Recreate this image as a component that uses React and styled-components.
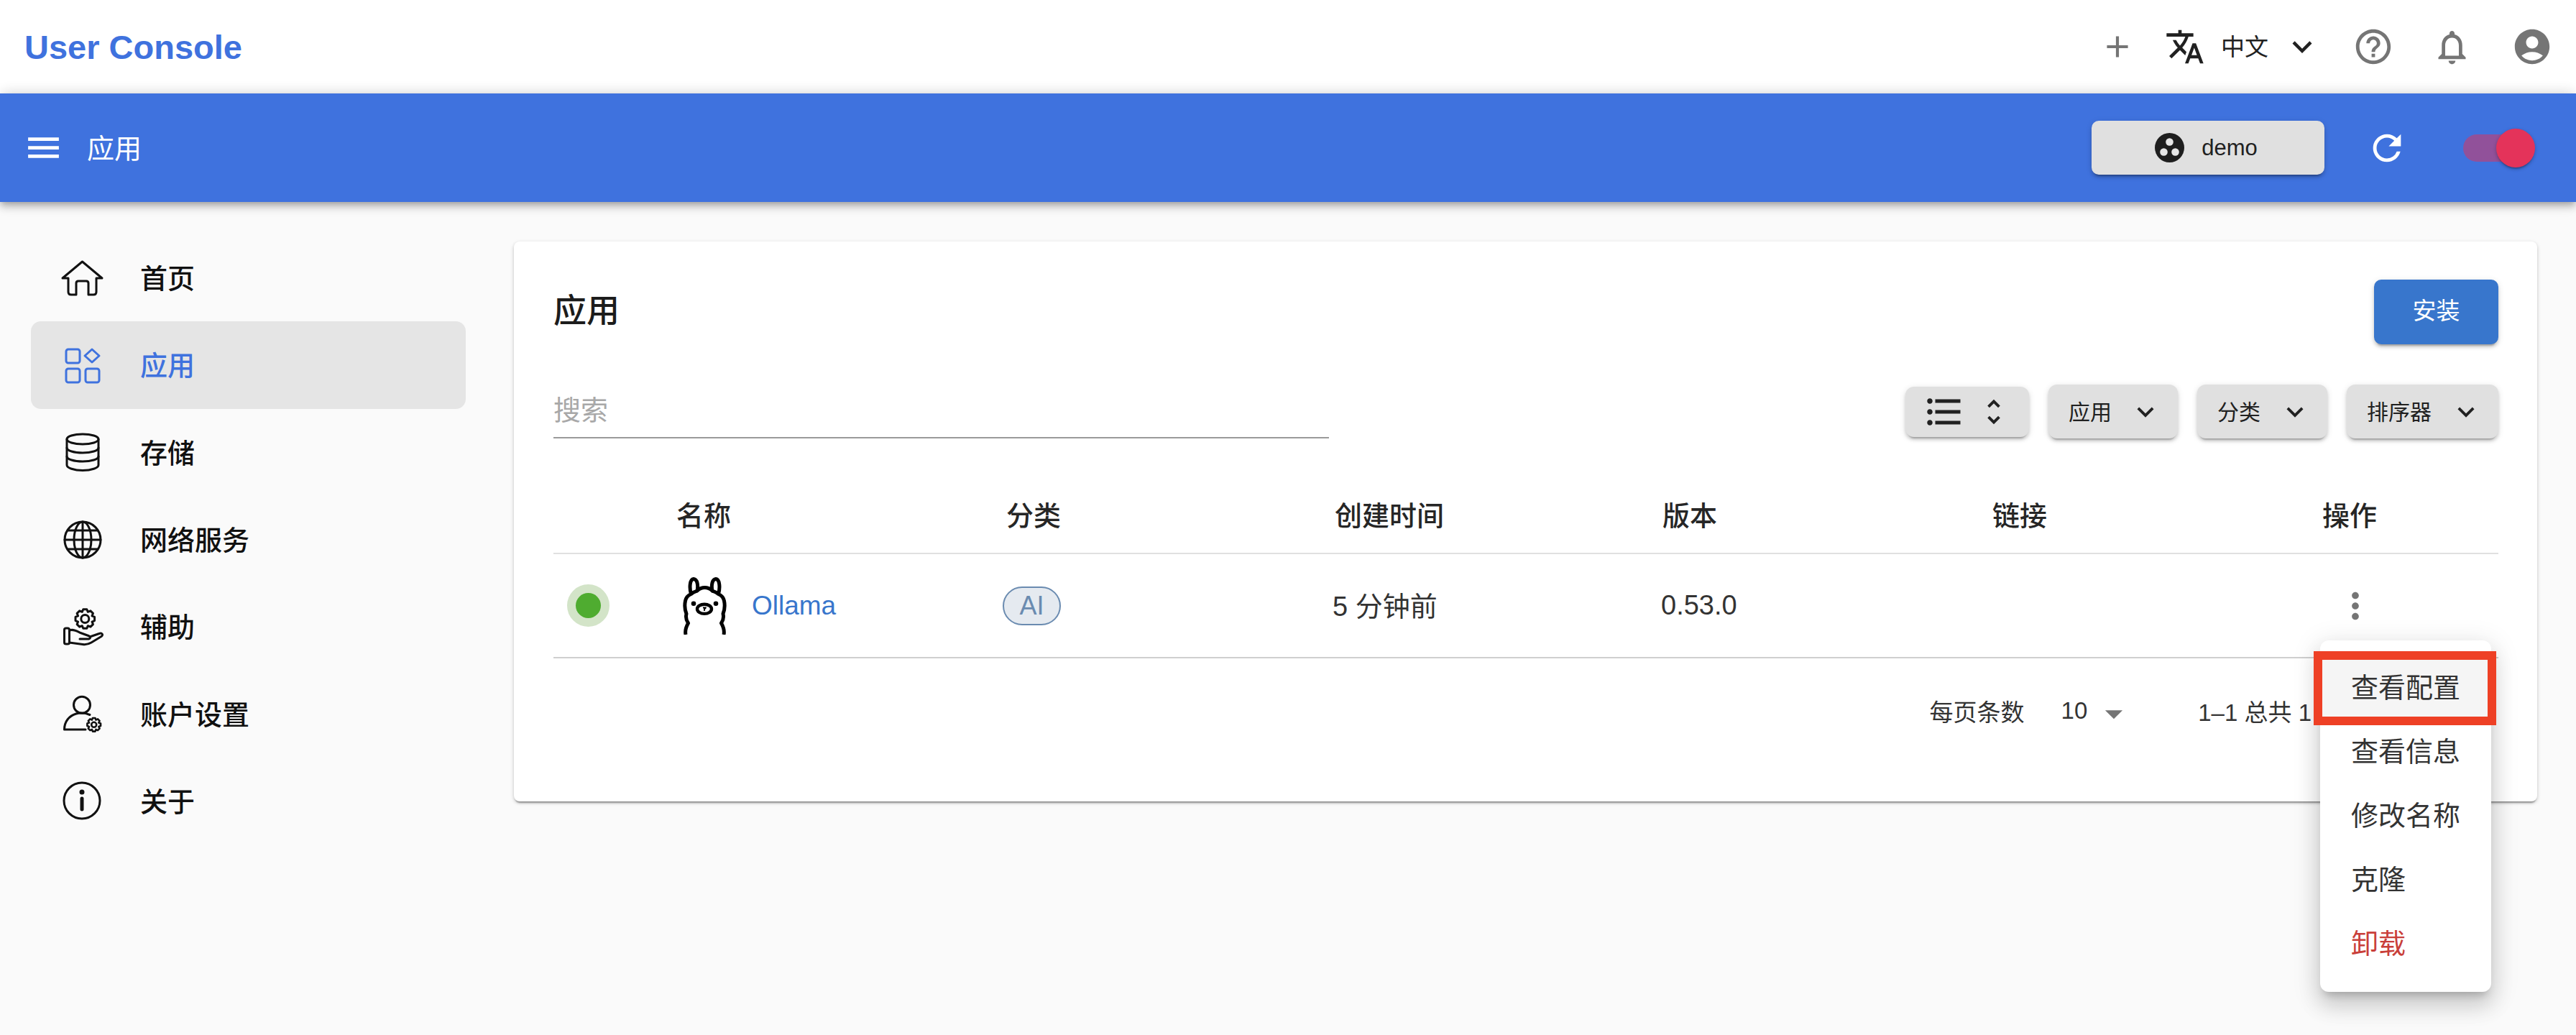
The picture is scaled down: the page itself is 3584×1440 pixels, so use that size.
import React from 'react';
import styled, { createGlobalStyle } from 'styled-components';
import {
  MdMenu, MdAdd, MdTranslate, MdKeyboardArrowDown, MdHelpOutline, MdNotificationsNone,
  MdAccountCircle, MdRefresh, MdFormatListBulleted, MdUnfoldMore, MdMoreVert, MdArrowDropDown,
} from 'react-icons/md';

const FONT = '"Liberation Sans", "Noto Sans CJK SC", sans-serif';

const Global = createGlobalStyle`
  html, body { margin: 0; padding: 0; background: #fafafa; }
  body { font-family: ${FONT}; }
  * { box-sizing: border-box; }
`;

const Page = styled.div`
  width: 3584px;
  height: 1440px;
  overflow: hidden;
  background: #fafafa;
  display: flex;
  flex-direction: column;
`;

const TopBar = styled.header`
  height: 130px;
  flex: none;
  background: #fff;
  display: flex;
  align-items: center;
  justify-content: space-between;
  padding: 0 32px 0 34px;
`;

const Brand = styled.div`
  font-size: 47px;
  font-weight: 700;
  color: #3f72de;
`;

const TopActions = styled.div`
  display: flex;
  align-items: center;
`;

const IconSlot = styled.span`
  display: inline-flex;
  margin-left: ${(p) => p.$gap || 0}px;
  color: ${(p) => p.$color || '#757575'};
`;

const LangLabel = styled.span`
  font-size: 33px;
  color: #212121;
  margin: 0 0 4px 22px;
`;

const AppBar = styled.div`
  position: relative;
  z-index: 2;
  height: 151px;
  flex: none;
  background: #3f72de;
  display: flex;
  align-items: center;
  padding: 0 57px 0 39px;
  box-shadow: 0 4px 8px -2px rgba(0, 0, 0, 0.2), 0 8px 10px rgba(0, 0, 0, 0.14), 0 2px 20px rgba(0, 0, 0, 0.12),
    0 -6px 16px -4px rgba(0, 0, 0, 0.07);
  color: #fff;
`;

const MenuGlyph = styled.span`
  display: inline-flex;
  margin-left: -7px;
`;

const BarTitle = styled.div`
  font-size: 38px;
  margin: 0 0 5px 32px;
  flex: 1;
`;

const WorkspaceButton = styled.button`
  width: 324px;
  height: 75px;
  border: 0;
  border-radius: 10px;
  padding: 0 5px 0 0;
  background: #e0e0e0;
  color: #212121;
  font-family: ${FONT};
  font-size: 31px;
  display: flex;
  align-items: center;
  justify-content: center;
  gap: 24px;
  box-shadow: 0 6px 2px -4px rgba(0, 0, 0, 0.2), 0 4px 4px rgba(0, 0, 0, 0.14), 0 2px 10px rgba(0, 0, 0, 0.12);
`;

const Toggle = styled.div`
  position: relative;
  width: 100px;
  height: 38px;
  margin-left: 77px;
  border-radius: 19px 0 0 19px;
  background: linear-gradient(90deg, #91519a 0 93px, transparent 93px);
`;

const ToggleThumb = styled.span`
  position: absolute;
  right: 0;
  top: -8px;
  width: 54px;
  height: 54px;
  border-radius: 50%;
  background: #e4335a;
  box-shadow: 0 4px 2px -2px rgba(0, 0, 0, 0.2), 0 2px 4px rgba(0, 0, 0, 0.14), 0 2px 6px rgba(0, 0, 0, 0.12);
`;

const Body = styled.div`
  flex: 1;
  display: flex;
  min-height: 0;
`;

const Sidebar = styled.nav`
  width: 715px;
  flex: none;
  padding: 45px 67px 0 43px;
  display: flex;
  flex-direction: column;
`;

const NavItem = styled.div`
  height: 121.3px;
  flex: none;
  display: flex;
  align-items: center;
  padding-left: 42px;
  gap: 50px;
  border-radius: 14px;
  font-size: 38px;
  font-weight: 500;
  color: ${(p) => (p.$active ? '#3f72de' : '#111')};
  background: ${(p) => (p.$active ? '#e5e5e5' : 'transparent')};
`;

const NavLabel = styled.span`
  margin-bottom: 4px;
`;

const NavIcon = styled.svg`
  width: 60px;
  height: 60px;
  flex: none;
  fill: none;
  stroke: currentColor;
  stroke-width: 3;
  stroke-linejoin: round;
  stroke-linecap: round;
`;

const Main = styled.main`
  flex: 1;
  padding: 55px 54px 0 0;
`;

const Card = styled.section`
  position: relative;
  background: #fff;
  border-radius: 8px;
  padding: 53px 54px 49px 55px;
  box-shadow: 0 4px 2px -2px rgba(0, 0, 0, 0.3), 0 2px 4px rgba(0, 0, 0, 0.14), 0 2px 6px rgba(0, 0, 0, 0.1);
`;

const CardHead = styled.div`
  height: 90px;
  display: flex;
  align-items: center;
  justify-content: space-between;
`;

const CardTitle = styled.h1`
  margin: 0 0 13px;
  font-size: 46px;
  font-weight: 500;
  color: #1c1c1c;
`;

const PrimaryButton = styled.button`
  width: 173px;
  height: 90px;
  border: 0;
  border-radius: 10px;
  padding: 0 0 8px;
  background: #3876cc;
  color: #fff;
  font-family: ${FONT};
  font-size: 33px;
  box-shadow: 0 6px 2px -4px rgba(0, 0, 0, 0.2), 0 4px 4px rgba(0, 0, 0, 0.14), 0 2px 10px rgba(0, 0, 0, 0.12);
`;

const Toolbar = styled.div`
  margin-top: 56px;
  height: 75px;
  display: flex;
  align-items: center;
  justify-content: space-between;
`;

const SearchInput = styled.input`
  width: 1079px;
  height: 75px;
  border: 0;
  border-bottom: 2px solid #9a9a9a;
  outline: 0;
  padding: 0;
  background: transparent;
  font-family: ${FONT};
  font-size: 38px;
  &::placeholder { color: #a8a8a8; opacity: 1; }
`;

const ToolGroup = styled.div`
  display: flex;
  align-items: center;
  gap: 27px;
`;

const ToolButton = styled.button`
  width: ${(p) => p.$w}px;
  height: ${(p) => p.$h || 75}px;
  border: 0;
  padding: 0 22px 0 28px;
  border-radius: 12px;
  background: #e0e0e0;
  color: #212121;
  font-family: ${FONT};
  font-size: 30px;
  display: flex;
  align-items: center;
  justify-content: space-between;
  box-shadow: 0 6px 2px -4px rgba(0, 0, 0, 0.2), 0 4px 4px rgba(0, 0, 0, 0.14), 0 2px 10px rgba(0, 0, 0, 0.12);
`;

const ToolLabel = styled.span`
  margin-bottom: 4px;
`;

const ViewButton = styled(ToolButton)`
  padding: 0 26px 0 24px;
`;

const Columns = styled.div`
  display: grid;
  grid-template-columns: 171px 459px 457px 456px 459px 459px 245px;
  align-items: center;
`;

const HeaderRow = styled(Columns)`
  margin-top: 54px;
  height: 107px;
  padding-bottom: 4px;
  border-bottom: 2px solid #e0e0e0;
  font-size: 38px;
  font-weight: 500;
  color: #262626;
`;

const DataRow = styled(Columns)`
  height: 145px;
  border-bottom: 2px solid #cfcfcf;
  font-size: 38px;
  color: #333;
`;

const TimeCell = styled.div`
  margin: 0 0 4px -3px;
`;

const VersionCell = styled.div`
  margin-left: -2px;
`;

const StatusDot = styled.span`
  display: block;
  width: 59px;
  height: 59px;
  margin-left: 19px;
  border-radius: 50%;
  background: #d3e4c8;
  border: 12.5px solid #d3e4c8;

  &::after {
    content: '';
    display: block;
    width: 100%;
    height: 100%;
    border-radius: 50%;
    background: #4fac30;
  }
`;

const NameCell = styled.div`
  display: flex;
  align-items: center;
  gap: 35px;
  padding-left: 9px;
`;

const AppLink = styled.a`
  color: #3876cc;
  font-size: 37px;
`;

const Chip = styled.span`
  display: inline-flex;
  align-items: center;
  justify-content: center;
  width: 81px;
  height: 54px;
  margin-left: -5px;
  border-radius: 27px;
  background: #e5eaf0;
  border: 2px solid #6a8bb0;
  color: #6a8bb0;
  font-size: 36px;
`;

const KebabCell = styled.div`
  display: flex;
  color: #757575;
  margin-left: 17px;
`;

const Pagination = styled.div`
  height: 150px;
  display: flex;
  align-items: center;
  justify-content: flex-end;
  padding: 0 260px 4px 0;
  font-size: 33px;
  color: #333;
`;

const PageSize = styled.span`
  margin-left: 51px;
`;

const PageCaret = styled.span`
  display: inline-flex;
  color: #757575;
  margin: 8px 88px 0 8px;
`;

const Popover = styled.div`
  position: absolute;
  z-index: 3;
  top: 555px;
  right: 64px;
  width: 238px;
  height: 489px;
  padding: 22px 0;
  background: #fff;
  border-radius: 12px;
  box-shadow: 0 10px 12px -6px rgba(0, 0, 0, 0.2), 0 20px 30px 2px rgba(0, 0, 0, 0.12), 0 8px 36px 6px rgba(0, 0, 0, 0.1);
`;

const PopItem = styled.div`
  position: relative;
  height: 89px;
  display: flex;
  align-items: center;
  padding: 0 0 9px 43px;
  font-size: 38px;
  color: ${(p) => (p.$danger ? '#c93f3a' : '#333')};
  background: ${(p) => (p.$active ? '#f5f5f5' : 'transparent')};
`;

const Callout = styled.span`
  position: absolute;
  top: -7px;
  bottom: -7px;
  left: -9px;
  right: -7px;
  border: 12px solid #ee4025;
`;

const gearPath = (cx, cy, outer, inner, teeth) => {
  const pts = [];
  const step = (Math.PI * 2) / teeth;
  for (let i = 0; i < teeth; i += 1) {
    const a = i * step - Math.PI / 2;
    [[-0.5, inner], [-0.24, outer], [0.24, outer], [0.5, inner]].forEach(([o, r]) => {
      const t = a + o * step;
      pts.push(`${(cx + r * Math.cos(t)).toFixed(2)} ${(cy + r * Math.sin(t)).toFixed(2)}`);
    });
  }
  return `M${pts.join(' L')} Z`;
};

const Home = () => (
  <NavIcon viewBox="0 0 60 60">
    <path d="M2 30 L29.5 7 L57 30 H49 V49 Q49 53 45 53 H38 V37 Q38 34 35 34 H24 Q21 34 21 37 V53 H14 Q10 53 10 49 V30 Z" />
  </NavIcon>
);

const Apps = () => (
  <NavIcon viewBox="0 0 60 60">
    <rect x="7" y="8" width="19" height="19" rx="3" />
    <rect x="7" y="35" width="19" height="19" rx="3" />
    <rect x="34" y="35" width="19" height="19" rx="3" />
    <path d="M43 8 L53 17 L43 26 L33 17 Z" />
  </NavIcon>
);

const Storage = () => (
  <NavIcon viewBox="0 0 60 60">
    <ellipse cx="30" cy="12" rx="22" ry="7" />
    <path d="M8 12 V48 C8 52 18 55.5 30 55.5 C42 55.5 52 52 52 48 V12" />
    <path d="M8 24 C8 28 18 31 30 31 C42 31 52 28 52 24" />
    <path d="M8 36 C8 40 18 43 30 43 C42 43 52 40 52 36" />
  </NavIcon>
);

const Globe = () => (
  <NavIcon viewBox="0 0 60 60">
    <circle cx="30" cy="30" r="25" />
    <ellipse cx="30" cy="30" rx="12" ry="25" />
    <path d="M30 5 V55 M5 30 H55 M9 17 H51 M9 43 H51" />
  </NavIcon>
);

const HandGear = () => (
  <NavIcon viewBox="0 0 60 60">
    <path d={gearPath(33.3, 19, 13.5, 10.5, 8)} />
    <circle cx="33.3" cy="19" r="5.5" />
    <path d="M4.5 34 Q4.5 32 7 32 H9 Q11.5 32 11.5 34 V52 Q11.5 54 9 54 H7 Q4.5 54 4.5 52 Z" />
    <path d="M11.5 35 C17 33 22 36 27 38.5 L38 42.5 C42 44 41 47 37 47 H26" />
    <path d="M40 44 L53 39.5 C57 38 59 41 56 43.5 L42 52 C38 54.5 34 55 30 54.5 L11.5 52" />
  </NavIcon>
);

const UserGear = () => (
  <NavIcon viewBox="0 0 60 60">
    <circle cx="29" cy="17.7" r="11.5" />
    <path d="M40 31.5 C34 29 27 28.5 21 30 C11 33 4.5 41 4.5 52 H34" />
    <path d={gearPath(45.7, 45.3, 9.5, 7.2, 8)} strokeWidth="2.6" />
    <circle cx="45.7" cy="45.3" r="3.5" strokeWidth="2.6" />
  </NavIcon>
);

const Info = () => (
  <NavIcon viewBox="0 0 60 60">
    <circle cx="29" cy="30" r="25" />
    <path d="M29 27 V42" strokeWidth="5" />
    <circle cx="29" cy="18" r="2" strokeWidth="3" fill="currentColor" />
  </NavIcon>
);

const WorkspaceIcon = () => (
  <svg width="41" height="41" viewBox="0 0 41 41">
    <circle cx="20.5" cy="20.5" r="20.5" fill="#1e1e1e" />
    <circle cx="20.5" cy="12.5" r="5.3" fill="#e6e6e6" />
    <circle cx="12.5" cy="26.5" r="5.3" fill="#e6e6e6" />
    <circle cx="28.5" cy="26.5" r="5.3" fill="#e6e6e6" />
  </svg>
);

const Llama = () => (
  <svg width="61" height="80" viewBox="0 0 61 80" fill="none" stroke="#000" strokeWidth="5" strokeLinejoin="round">
    <path d="M4 80 C3 75 4 70 7.5 64 C4 59 4 55 5 51 C3 46 2.5 38 3.5 33 C4.5 28 8 25 11.5 23.5 C9 15 9.5 3 15 2.5 C20.5 3 21.5 12 20 19 C23 16 27 14.5 30.5 14.5 C34 14.5 38 16 41 19 C39.5 12 40.5 3 46 2.5 C51.5 3 52 15 49.5 23.5 C53 25 56.5 28 57.5 33 C58.5 38 58 46 56 51 C57 55 57 59 53.5 64 C57 70 58 75 57 80" />
    <path d="M11.5 23.5 C14 21 17 20 20 19 M41 19 C44 20 47 21 49.5 23.5" />
    <ellipse cx="30" cy="44.3" rx="10" ry="6.6" strokeWidth="4.4" />
    <circle cx="15" cy="36.7" r="3.3" fill="#000" stroke="none" />
    <circle cx="46" cy="36.7" r="3.3" fill="#000" stroke="none" />
    <path d="M28 42.5 H32 L30 44.5 V47" strokeWidth="1.8" />
  </svg>
);

const NAV = [
  ['首页', Home],
  ['应用', Apps, true],
  ['存储', Storage],
  ['网络服务', Globe],
  ['辅助', HandGear],
  ['账户设置', UserGear],
  ['关于', Info],
];

const COLS = ['', '名称', '分类', '创建时间', '版本', '链接', '操作'];

const ACTIONS = ['查看信息', '修改名称', '克隆'];

export default function App() {
  return (
    <Page>
      <Global />
      <TopBar>
        <Brand>User Console</Brand>
        <TopActions>
          <IconSlot><MdAdd size={50} /></IconSlot>
          <IconSlot $gap={41} $color="#212121"><MdTranslate size={56} /></IconSlot>
          <LangLabel>中文</LangLabel>
          <IconSlot $gap={20} $color="#212121"><MdKeyboardArrowDown size={54} /></IconSlot>
          <IconSlot $gap={43}><MdHelpOutline size={58} /></IconSlot>
          <IconSlot $gap={52}><MdNotificationsNone size={57} /></IconSlot>
          <IconSlot $gap={54}><MdAccountCircle size={58} /></IconSlot>
        </TopActions>
      </TopBar>
      <AppBar>
        <MenuGlyph><MdMenu size={57} /></MenuGlyph>
        <BarTitle>应用</BarTitle>
        <WorkspaceButton><WorkspaceIcon />demo</WorkspaceButton>
        <IconSlot $gap={58} $color="#fff"><MdRefresh size={58} /></IconSlot>
        <Toggle><ToggleThumb /></Toggle>
      </AppBar>
      <Body>
        <Sidebar>
          {NAV.map(([label, Icon, active]) => (
            <NavItem key={label} $active={active}>
              <Icon />
              <NavLabel>{label}</NavLabel>
            </NavItem>
          ))}
        </Sidebar>
        <Main>
          <Card>
            <CardHead>
              <CardTitle>应用</CardTitle>
              <PrimaryButton>安装</PrimaryButton>
            </CardHead>
            <Toolbar>
              <SearchInput placeholder="搜索" />
              <ToolGroup>
                <ViewButton $w={172} $h={70}>
                  <MdFormatListBulleted size={60} />
                  <MdUnfoldMore size={46} />
                </ViewButton>
                <ToolButton $w={180}><ToolLabel>应用</ToolLabel><MdKeyboardArrowDown size={46} /></ToolButton>
                <ToolButton $w={181}><ToolLabel>分类</ToolLabel><MdKeyboardArrowDown size={46} /></ToolButton>
                <ToolButton $w={211}><ToolLabel>排序器</ToolLabel><MdKeyboardArrowDown size={46} /></ToolButton>
              </ToolGroup>
            </Toolbar>
            <HeaderRow>
              {COLS.map((c) => <div key={c}>{c}</div>)}
            </HeaderRow>
            <DataRow>
              <StatusDot />
              <NameCell>
                <Llama />
                <AppLink>Ollama</AppLink>
              </NameCell>
              <div><Chip>AI</Chip></div>
              <TimeCell>5 分钟前</TimeCell>
              <VersionCell>0.53.0</VersionCell>
              <div />
              <KebabCell><MdMoreVert size={58} /></KebabCell>
            </DataRow>
            <Pagination>
              每页条数
              <PageSize>10</PageSize>
              <PageCaret><MdArrowDropDown size={58} /></PageCaret>
              1–1 总共 1
            </Pagination>
            <Popover>
              <PopItem $active>查看配置<Callout /></PopItem>
              {ACTIONS.map((a) => <PopItem key={a}>{a}</PopItem>)}
              <PopItem $danger>卸载</PopItem>
            </Popover>
          </Card>
        </Main>
      </Body>
    </Page>
  );
}
